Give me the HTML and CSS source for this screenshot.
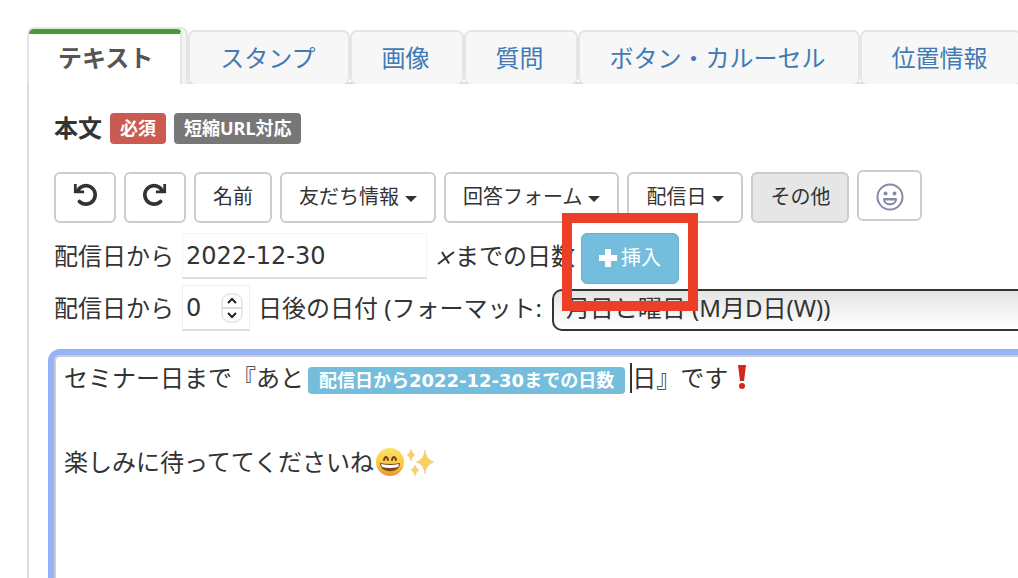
FILE: index.html
```html
<!DOCTYPE html>
<html lang="ja">
<head>
  <meta charset="UTF-8">
  <meta name="viewport" content="width=device-width, initial-scale=1.0">
  <title>メッセージ作成</title>
  <link rel="stylesheet" href="styles.css">
</head>
<body>
  <ul class="tabs">
    <li class="active"><a href="#text">テキスト</a></li>
    <li><a href="#stamp">スタンプ</a></li>
    <li><a href="#image">画像</a></li>
    <li><a href="#question">質問</a></li>
    <li><a href="#carousel">ボタン・カルーセル</a></li>
    <li><a href="#location">位置情報</a></li>
  </ul>

  <div class="panel" id="text">
    <div class="heading">
      <span class="title" id="body-label">本文</span>
      <span class="label label-danger">必須</span>
      <span class="label label-default">短縮URL対応</span>
    </div>

    <div class="toolbar">
      <button type="button" class="btn btn-icon" aria-label="元に戻す">
        <svg width="26" height="26" viewBox="0 0 26 26"><path d="M5 8.500A10 10 0 1 1 7 20" class="arc"/><path d="M1 1h3v7h8v3H1z" class="head"/></svg>
      </button>
      <button type="button" class="btn btn-icon" aria-label="やり直す">
        <svg width="26" height="26" viewBox="0 0 26 26"><path d="M21 8.500A10 10 0 1 0 19 20" class="arc"/><path d="M25 1h-3v7h-8v3h11z" class="head"/></svg>
      </button>
      <button type="button" class="btn">名前</button>
      <button type="button" class="btn">友だち情報<span class="caret"></span></button>
      <button type="button" class="btn">回答フォーム<span class="caret"></span></button>
      <button type="button" class="btn">配信日<span class="caret"></span></button>
      <button type="button" class="btn btn-active">その他</button>
      <button type="button" class="btn btn-emoji" aria-label="絵文字">
        <svg width="28" height="28" viewBox="0 0 28 28">
          <circle cx="14" cy="14" r="12.500" fill="none" stroke="#858ba6" stroke-width="2"/>
          <circle cx="9.500" cy="10.500" r="2" fill="#858ba6"/>
          <circle cx="18.500" cy="10.500" r="2" fill="#858ba6"/>
          <path d="M8 16h12c0 7-12 7-12 0z" fill="none" stroke="#858ba6" stroke-width="2" stroke-linejoin="round"/>
          <path d="M8 16.500h12" stroke="#858ba6" stroke-width="2"/>
        </svg>
      </button>
    </div>

    <div class="row">
      <label for="until">配信日から</label>
      <input type="text" class="date" id="until" value="2022-12-30">
      <button type="button" class="clear" aria-label="クリア">
        <svg width="18" height="14" viewBox="0 0 18 14"><path d="M5 1l7 11.500M1 13L17 1" fill="none" stroke="#333" stroke-width="2"/></svg>
      </button>
      <span>までの日数</span>
      <div class="insert">
        <button type="button" class="btn btn-info">
          <svg width="18" height="18" viewBox="0 0 18 18"><path d="M6 0h6v6h6v6h-6v6H6v-6H0V6h6z" fill="#fff"/></svg>挿入
        </button>
      </div>
    </div>

    <div class="row">
      <label for="days">配信日から</label>
      <div class="number">
        <input type="number" id="days" value="0">
        <svg class="stepper" width="22" height="30" viewBox="0 0 22 30">
          <rect x="1" y="1" width="20" height="28" rx="8" fill="#fff" stroke="#d8d8d8"/>
          <path d="M1 15h20" stroke="#ddd" stroke-width="2"/>
          <path d="M7 10l4-4 4 4M7 20l4 4 4-4" fill="none" stroke="#222" stroke-width="2"/>
        </svg>
      </div>
      <label for="format" class="format-label">日後の日付 (フォーマット:</label>
      <select id="format">
        <option>月日と曜日 (M月D日(W))</option>
      </select>
    </div>

    <div class="editor" contenteditable="true" role="textbox" aria-labelledby="body-label">
      <div>セミナー日まで『あと<span class="label label-info">配信日から2022-12-30までの日数</span><span class="cursor"></span>日』です<svg width="30" height="30" viewBox="0 0 30 30" role="img" aria-label="びっくりマーク"><path d="M10 2h8l-2 16h-4z" fill="#d3271e"/><circle cx="14" cy="23" r="3" fill="#d3271e"/></svg></div>
      <div><br></div>
      <div>楽しみに待っててくださいね<svg width="30" height="30" viewBox="0 0 30 30" role="img" aria-label="笑顔">
        <defs>
          <linearGradient id="face" x1="0" y1="0" x2="0" y2="1"><stop offset="0" stop-color="#fbe36a"/><stop offset="0.600" stop-color="#f8c53d"/><stop offset="1" stop-color="#e9962e"/></linearGradient>
        </defs>
        <circle cx="16" cy="15" r="14" fill="url(#face)"/>
        <path d="M10 13c1-4 3-4 4 0M18 13c1-4 3-4 4 0" fill="none" stroke="#70401a" stroke-width="2" stroke-linecap="round"/>
        <path d="M6 16q10 2 20 0c0 11-20 11-20 0z" fill="#7a451c"/>
        <path d="M7 17q9 2 18 0l-1 3q-8 2-16 0z" fill="#fff"/>
      </svg><svg class="sparkles" width="30" height="30" viewBox="0 0 30 30" role="img" aria-label="きらきら"><g fill="#f9cf62" stroke="#f3c06a" stroke-width="0.500"><path d="M19 3q1 10 9 12q-8 2-9 12q-1-10-9-12q8-2 9-12z"/><path d="M5 2q1 5 4 6q-3 1-4 6q-1-5-4-6q3-1 4-6z"/><path d="M9 18q1 4 4 5q-3 1-4 6q-1-5-4-6q3-1 4-5z"/></g></svg></div>
    </div>
  </div>
</body>
</html>
```

FILE: styles.css
```css
* {
  box-sizing: border-box;
}
body {
  margin: 0;
  padding: 27px 0 0 27px;
  min-height: 100vh;
  overflow: hidden;
  display: flex;
  flex-direction: column;
  background-color: #fff;
  color: #333;
  font-family: "Noto Sans", "Noto Sans CJK JP", sans-serif;
  font-size: 24px;
  line-height: 46px;
}
button, input, select {
  font: inherit;
  color: inherit;
}
.tabs {
  display: flex;
  align-items: flex-end;
  margin: 0;
  padding: 0;
  list-style: none;
  white-space: nowrap;
  box-shadow: inset 0 -2px #ddd;
}
.tabs li {
  flex: none;
  border: 2px solid #e5e5e5;
  border-bottom: none;
  border-radius: 7px;
  background-color: #f7f7f7;
}
.tabs a {
  display: block;
  padding: 3px 32px 3px 30px;
  color: #427ab6;
  text-decoration: none;
}
.tabs .active {
  padding-right: 4px;
  border-radius: 7px 7px 0 0;
  background-color: #f4f4f4;
}
.tabs .active a {
  padding: 1px 27px 3px 29px;
  border-top: 5px solid #449d2c;
  border-right: 2px solid #e5e5e5;
  border-radius: 5px 5px 0 0;
  background-color: #fff;
  color: #555;
  font-weight: bold;
}
.panel {
  flex: 1;
  display: flex;
  flex-direction: column;
  padding: 21px 0 0 25px;
  border-left: 2px solid #ddd;
}
.heading {
  display: flex;
  align-items: center;
  gap: 8px;
  margin-bottom: 21px;
}
.title {
  font-weight: bold;
}
.label {
  padding: 0 11px;
  border-radius: 4px;
  color: #fff;
  font-size: 18px;
  font-weight: bold;
  line-height: 31px;
}
.heading .label {
  padding: 0 10px;
}
.label-danger {
  background-color: #cb5a52;
}
.label-default {
  background-color: #777;
}
.toolbar {
  display: flex;
  gap: 8px;
  margin-bottom: 10px;
}
.btn {
  display: flex;
  align-items: center;
  justify-content: center;
  height: 51px;
  padding: 0 17px 2px;
  border: 2px solid #ccc;
  border-radius: 6px;
  background-color: #fff;
  font-size: 20px;
  line-height: 28px;
  white-space: nowrap;
  cursor: pointer;
}
.btn-icon {
  width: 62px;
  padding-bottom: 6px;
}
.arc {
  fill: none;
  stroke: #333;
  stroke-width: 4;
  stroke-linecap: round;
}
.head {
  fill: #333;
}
.btn-active {
  background-color: #e6e6e6;
}
.btn-emoji {
  width: 65px;
  margin-top: -2px;
  padding: 2px 0 0;
}
.caret {
  margin: 5px 0 0 6px;
  border: 6px solid transparent;
  border-top-color: #333;
  border-bottom: none;
}
.row {
  display: flex;
  align-items: flex-start;
  white-space: nowrap;
}
.row + .row {
  height: 46px;
  margin-top: 1px;
}
.date, .number input {
  height: 46px;
  margin-left: 8px;
  padding: 0 3px;
  border: 1px solid #eee;
  border-bottom: 2px solid #ddd;
  background-color: #fff;
  font-family: "DejaVu Sans", sans-serif;
}
.date {
  width: 245px;
  border-color: #f6f6f6 #f6f6f6 #ddd;
}
.clear {
  height: 46px;
  padding: 0 0 0 10px;
  border: none;
  background: none;
  cursor: pointer;
}
.insert {
  position: relative;
  margin-left: 6px;
}
/* callout frame round the insert button */
.insert::after {
  content: "";
  position: absolute;
  top: -20px;
  right: -19px;
  bottom: -27px;
  left: -19px;
  border: 10px solid #eb3f27;
  pointer-events: none;
  z-index: 1;
}
.btn-info {
  gap: 4px;
  border: 1px solid #63b2d2;
  background-color: #74bddc;
  color: #fff;
}
.number {
  position: relative;
}
.number input {
  display: block;
  width: 68px;
  appearance: textfield;
}
.number input::-webkit-inner-spin-button {
  appearance: none;
}
.stepper {
  position: absolute;
  top: 8px;
  right: 7px;
}
.format-label {
  margin-left: 8px;
}
select {
  flex: 1;
  height: 42px;
  margin: 4px -12px 0 10px;
  padding: 0 12px 4px;
  border: 2px solid #333;
  border-radius: 10px;
  background: linear-gradient(#e4e4e4, #fff);
  line-height: 34px;
  appearance: none;
}
.editor {
  flex: 1;
  margin: 24px -12px -12px 0;
  padding: 0 8px;
  border: 2px solid #ccc;
  border-radius: 6px;
  outline: 6px solid #94b3f8;
  line-height: 42px;
}
.editor svg {
  margin-top: -6px;
  vertical-align: middle;
}
.label-info {
  display: inline-block;
  margin: 0 5px 0 4px;
  background-color: #74bddc;
  font-family: "DejaVu Sans", "Noto Sans CJK JP", sans-serif;
  line-height: 27px;
}
.cursor {
  display: inline-block;
  width: 2px;
  height: 30px;
  margin-top: -6px;
  background-color: #333;
  vertical-align: middle;
}
.sparkles {
  margin-left: 2px;
}
```
